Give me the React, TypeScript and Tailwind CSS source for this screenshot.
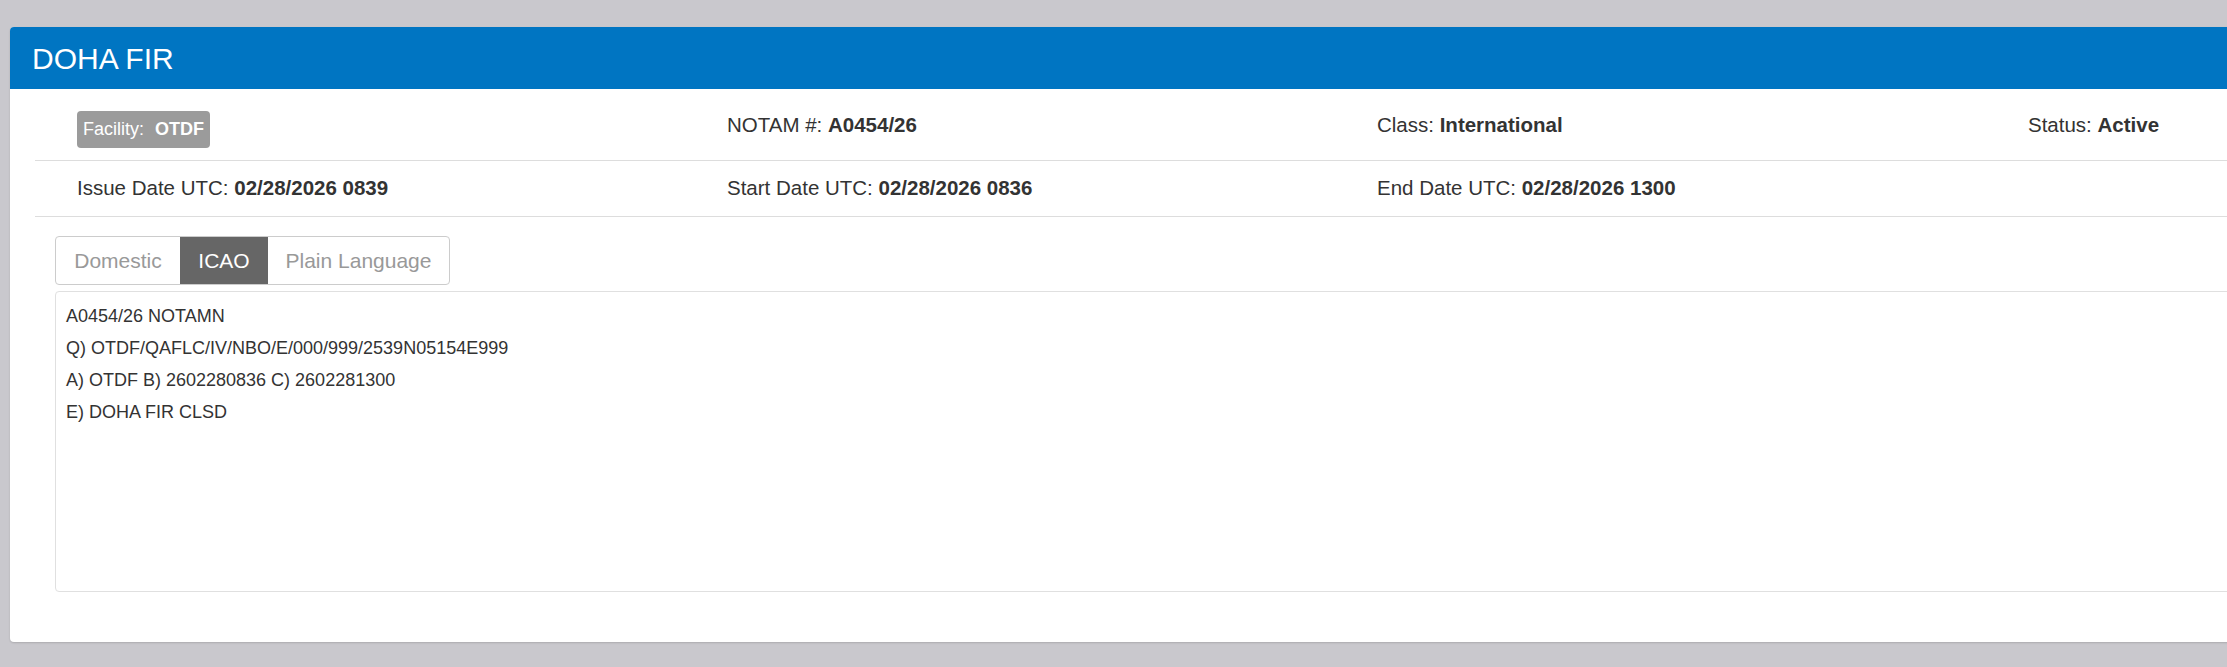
import React from "react";

const lines = [
  "A0454/26 NOTAMN",
  "Q) OTDF/QAFLC/IV/NBO/E/000/999/2539N05154E999",
  "A) OTDF B) 2602280836 C) 2602281300",
  "E) DOHA FIR CLSD",
];

function Field({ label, value }: { label: string; value: string }) {
  return (
    <div className="text-[20.5px] text-[#333] whitespace-nowrap">
      {label} <span className="font-bold">{value}</span>
    </div>
  );
}

export default function App() {
  return (
    <div
      className="w-[2227px] h-[667px] overflow-hidden bg-[#c9c8cd] pt-[27px] pl-[10px]"
      style={{ fontFamily: '"Liberation Sans", Arial, sans-serif' }}
    >
      <div className="w-[2280px] h-[615px] bg-white rounded-[4px] shadow-[0_1px_2px_rgba(0,0,0,0.15)] flex flex-col">
        <div className="h-[62px] bg-[#0075c2] rounded-t-[4px] pl-[22px] flex items-center text-white text-[30px]">
          DOHA FIR
        </div>

        <div className="pl-[25px] flex flex-col">
          <div className="h-[72px] border-b border-[#dddddd] pl-[42px] pt-[2px] grid grid-cols-[650px_650px_651px_1fr] items-center">
            <div className="pt-[7px]">
              <span className="inline-flex items-center h-[37px] px-[6px] rounded-[4px] bg-[#9b9b9b] text-white text-[18px] whitespace-nowrap">
                Facility:<span className="font-bold ml-[11px]">OTDF</span>
              </span>
            </div>
            <Field label="NOTAM #:" value="A0454/26" />
            <Field label="Class:" value="International" />
            <Field label="Status:" value="Active" />
          </div>

          <div className="h-[56px] border-b border-[#dddddd] pl-[42px] grid grid-cols-[650px_650px_651px_1fr] items-center">
            <Field label="Issue Date UTC:" value="02/28/2026 0839" />
            <Field label="Start Date UTC:" value="02/28/2026 0836" />
            <Field label="End Date UTC:" value="02/28/2026 1300" />
            <div />
          </div>

          <div className="pl-[20px] pt-[19px] flex flex-col">
            <div className="flex h-[49px] w-fit border border-[#cccccc] rounded-[4px] overflow-hidden text-[21px]">
              <div className="w-[124px] flex items-center justify-center text-[#999999]">Domestic</div>
              <div className="w-[88px] flex items-center justify-center bg-[#666666] text-white">ICAO</div>
              <div className="w-[181px] flex items-center justify-center text-[#999999]">Plain Language</div>
            </div>

            <div className="mt-[6px] h-[301px] border border-[#e0e0e0] rounded-[4px] pl-[10px] pt-[8px] text-[18px] leading-[32px] text-[#333]">
              {lines.map((l) => (
                <div key={l}>{l}</div>
              ))}
            </div>
          </div>
        </div>
      </div>
    </div>
  );
}
